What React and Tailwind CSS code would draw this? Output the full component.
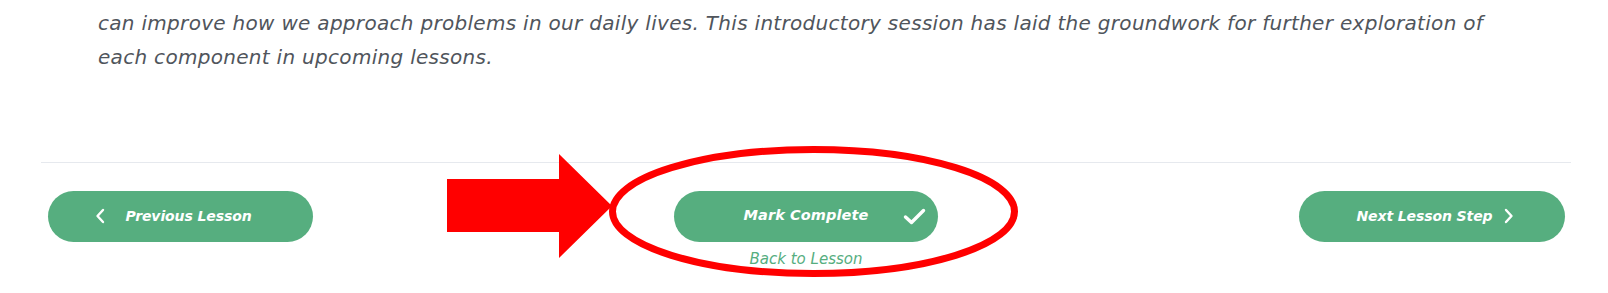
import React from 'react';

const ChevronLeft = () => (
  <svg width="10" height="16" viewBox="0 0 10 16" fill="none">
    <path d="M8 2L2.5 8L8 14" stroke="white" strokeWidth="2.4" strokeLinecap="round" strokeLinejoin="round" />
  </svg>
);

const ChevronRight = () => (
  <svg width="10" height="16" viewBox="0 0 10 16" fill="none">
    <path d="M2 2L7.5 8L2 14" stroke="white" strokeWidth="2.4" strokeLinecap="round" strokeLinejoin="round" />
  </svg>
);

const Check = () => (
  <svg width="23" height="17" viewBox="0 0 23 17" fill="none">
    <path d="M2.5 9L8.5 14.5L20.5 2.5" stroke="white" strokeWidth="3.4" strokeLinecap="round" strokeLinejoin="round" />
  </svg>
);

const font = { fontFamily: '"DejaVu Sans", "Liberation Sans", sans-serif' };

export default function App() {
  return (
    <div className="relative w-full h-[293px] overflow-hidden bg-white" style={font}>
      {/* Lesson text */}
      <div className="mt-[-29px] pl-[98px] text-[20px] leading-[34.5px] italic tracking-[0.3px] text-[#50555c] whitespace-nowrap">
        <p>These components work together and understanding how they interact with one another, step by step, through</p>
        <p>can improve how we approach problems in our daily lives. This introductory session has laid the groundwork for further exploration of</p>
        <p>each component in upcoming lessons.</p>
      </div>

      {/* Navigation */}
      <div className="mt-[87px] pl-[41px] pr-[37px]">
        <div className="border-t border-[#e6e9ee]" />
        <div className="flex justify-between items-start pt-[28px] pl-[7px] pr-[6px]">
          <button className="w-[265px] h-[51px] rounded-full bg-[#56ae7f] flex items-center justify-center gap-[20px] pr-[14px] text-white text-[14px] font-bold italic tracking-[-0.1px]">
            <ChevronLeft />
            Previous Lesson
          </button>

          <div className="flex flex-col items-center">
            <button className="relative w-[264px] h-[51px] rounded-full bg-[#56ae7f] flex items-center justify-center text-white text-[14.5px] font-bold italic tracking-[0.1px]">
              Mark Complete
              <span className="absolute right-[12px] top-[17px]">
                <Check />
              </span>
            </button>
            <a className="mt-[8px] text-[15px] leading-[18px] italic text-[#56ae7f]">Back to Lesson</a>
          </div>

          <button className="w-[266px] h-[51px] rounded-full bg-[#56ae7f] flex items-center justify-center gap-[11px] pl-[6px] text-white text-[14px] font-bold italic tracking-[-0.1px]">
            Next Lesson Step
            <ChevronRight />
          </button>
        </div>
      </div>

      {/* Annotation */}
      <svg className="absolute left-0 top-0 pointer-events-none" width="1608" height="293">
        <polygon points="447,179 559,179 559,154 612,206 559,258 559,232 447,232" fill="#ff0000" />
        <ellipse cx="813.5" cy="211.5" rx="201" ry="62" fill="none" stroke="#ff0000" strokeWidth="7" />
      </svg>
    </div>
  );
}
